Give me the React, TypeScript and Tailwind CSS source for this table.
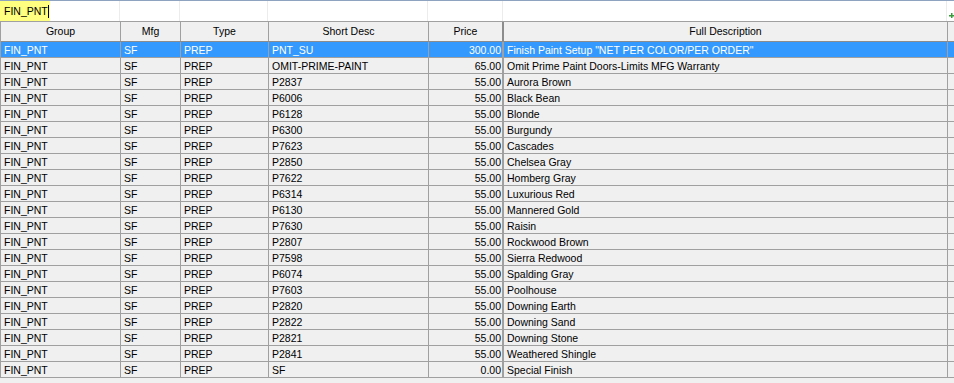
import React from "react";

const rows: [string, string, string, string, string, string][] = [
  ["FIN_PNT", "SF", "PREP", "PNT_SU", "300.00", 'Finish Paint Setup "NET PER COLOR/PER ORDER"'],
  ["FIN_PNT", "SF", "PREP", "OMIT-PRIME-PAINT", "65.00", "Omit Prime Paint Doors-Limits MFG Warranty"],
  ["FIN_PNT", "SF", "PREP", "P2837", "55.00", "Aurora Brown"],
  ["FIN_PNT", "SF", "PREP", "P6006", "55.00", "Black Bean"],
  ["FIN_PNT", "SF", "PREP", "P6128", "55.00", "Blonde"],
  ["FIN_PNT", "SF", "PREP", "P6300", "55.00", "Burgundy"],
  ["FIN_PNT", "SF", "PREP", "P7623", "55.00", "Cascades"],
  ["FIN_PNT", "SF", "PREP", "P2850", "55.00", "Chelsea Gray"],
  ["FIN_PNT", "SF", "PREP", "P7622", "55.00", "Homberg Gray"],
  ["FIN_PNT", "SF", "PREP", "P6314", "55.00", "Luxurious Red"],
  ["FIN_PNT", "SF", "PREP", "P6130", "55.00", "Mannered Gold"],
  ["FIN_PNT", "SF", "PREP", "P7630", "55.00", "Raisin"],
  ["FIN_PNT", "SF", "PREP", "P2807", "55.00", "Rockwood Brown"],
  ["FIN_PNT", "SF", "PREP", "P7598", "55.00", "Sierra Redwood"],
  ["FIN_PNT", "SF", "PREP", "P6074", "55.00", "Spalding Gray"],
  ["FIN_PNT", "SF", "PREP", "P7603", "55.00", "Poolhouse"],
  ["FIN_PNT", "SF", "PREP", "P2820", "55.00", "Downing Earth"],
  ["FIN_PNT", "SF", "PREP", "P2822", "55.00", "Downing Sand"],
  ["FIN_PNT", "SF", "PREP", "P2821", "55.00", "Downing Stone"],
  ["FIN_PNT", "SF", "PREP", "P2841", "55.00", "Weathered Shingle"],
  ["FIN_PNT", "SF", "PREP", "SF", "0.00", "Special Finish"],
];

const cols = "grid grid-cols-[120px_60px_88px_160px_75px_444px_1fr]";

export default function App() {
  return (
    <div
      className="w-[954px] h-[383px] overflow-hidden bg-[#f0f0f0] text-[10.5px] text-black flex flex-col"
      style={{ fontFamily: '"Liberation Sans", Arial, sans-serif' }}
    >
      <div className="h-px bg-[#8da3bf] shrink-0" />
      {/* filter row */}
      <div className={`${cols} relative h-[20px] bg-white shrink-0`}>
        <div className="border-r border-[#ececec] flex items-stretch">
          <div className="w-[50px] bg-[#ffff80] flex items-center pl-[4px] pt-px">
            <span>FIN_PNT</span>
            <span className="w-px h-[13px] bg-black" />
          </div>
        </div>
        <div className="border-r border-[#ececec]" />
        <div className="border-r border-[#ececec]" />
        <div className="border-r border-[#ececec]" />
        <div className="border-r border-[#ececec]" />
        <div className="border-r border-[#ececec]" />
        <div />
        <svg className="absolute right-0 top-[11px]" width="5" height="7" viewBox="0 0 5 7">
          <rect x="0" y="3" width="5" height="1.5" fill="#3c9a3c" />
          <rect x="2" y="1" width="1.5" height="5" fill="#3c9a3c" />
        </svg>
      </div>
      {/* header */}
      <div className="border-l border-[#a0a0a0] flex flex-col">
        <div className={`${cols} h-[21px] bg-[#f0f0f0] border-t border-[#a0a0a0] border-b border-b-[#8c8c8c] shrink-0`}>
          {["Group", "Mfg", "Type", "Short Desc", "Price", "Full Description", ""].map((h, i) => (
            <div
              key={i}
              className={`flex items-center justify-center ${i === 4 ? "border-r-2 border-[#8c8c8c]" : i < 6 ? "border-r border-[#a0a0a0]" : ""}`}
            >
              {h}
            </div>
          ))}
        </div>
        {rows.map((r, ri) => {
          const sel = ri === 0;
          return (
            <div
              key={ri}
              className={`${cols} h-[16px] border-b border-[#a0a0a0] ${sel ? "bg-[#3399ff] text-white" : "bg-[#f0f0f0]"}`}
            >
              {r.map((c, ci) => (
                <div
                  key={ci}
                  className={`flex items-center leading-none whitespace-nowrap overflow-hidden pt-px ${ci === 4 ? "justify-end pr-[1px] border-r-2 border-[#a0a0a0]" : "pl-[3px] border-r border-[#a0a0a0]"}`}
                >
                  {c}
                </div>
              ))}
              <div />
            </div>
          );
        })}
        <div className="flex-1" />
      </div>
    </div>
  );
}
